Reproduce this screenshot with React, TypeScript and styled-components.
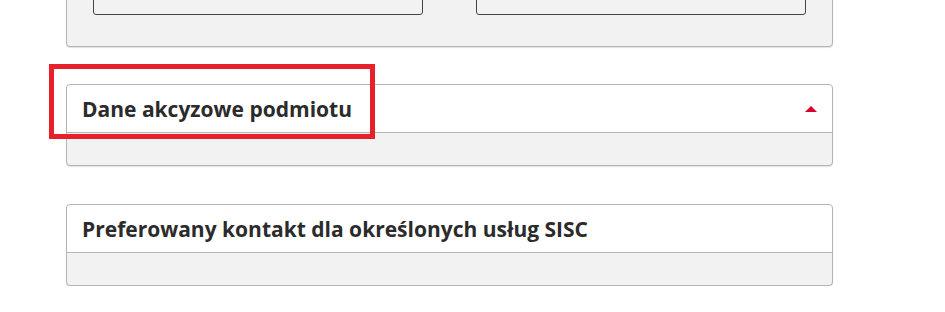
import styled, { createGlobalStyle } from 'styled-components'

const GlobalStyle = createGlobalStyle`
  html, body {
    margin: 0;
    padding: 0;
    background: #ffffff;
    font-family: "Open Sans", "Noto Sans", sans-serif;
    color: #2b2b2b;
  }
`

const Page = styled.div`
  width: 767px;
  margin-left: 66px;
  margin-top: -22px;
  display: flex;
  flex-direction: column;
`

const Panel = styled.section<{ $gap?: number }>`
  position: relative;
  margin-bottom: ${p => p.$gap ?? 0}px;
  border: 1px solid #b5b5b5;
  border-radius: 4px;
  background: #f2f2f2;
  box-shadow: 0 1px 1px rgba(0, 0, 0, 0.12);
`

const Fields = styled.div`
  display: grid;
  grid-template-columns: 330px 330px;
  justify-content: space-between;
  padding: 0 26px 31px 26px;
`

const Field = styled.div`
  height: 34px;
  border: 1px solid #444;
  border-radius: 3px;
  background: #f2f2f2;
`

const Header = styled.div`
  height: 47px;
  display: flex;
  align-items: center;
  justify-content: space-between;
  padding: 0 15px 0 15px;
  background: #ffffff;
  border-bottom: 1px solid #b5b5b5;
  border-radius: 4px 4px 0 0;
`

const Title = styled.h3`
  margin: 0;
  font-size: 21px;
  font-weight: 700;
  color: #2b2b2b;
`

const Caret = styled.span`
  width: 0;
  height: 0;
  border-left: 6px solid transparent;
  border-right: 6px solid transparent;
  border-bottom: 6px solid #d7002b;
`

const Body = styled.div`
  height: 32px;
`

const Highlight = styled.div`
  position: absolute;
  left: -18px;
  top: -21px;
  width: 326px;
  height: 75px;
  box-sizing: border-box;
  border: 5px solid #e8202a;
  pointer-events: none;
`

export default function App() {
  return (
    <>
      <GlobalStyle />
      <Page>
        <Panel $gap={37}>
          <Fields>
            <Field />
            <Field />
          </Fields>
        </Panel>
        <Panel $gap={38}>
          <Header>
            <Title>Dane akcyzowe podmiotu</Title>
            <Caret />
          </Header>
          <Body />
          <Highlight />
        </Panel>
        <Panel>
          <Header>
            <Title>Preferowany kontakt dla określonych usług SISC</Title>
          </Header>
          <Body />
        </Panel>
      </Page>
    </>
  )
}
